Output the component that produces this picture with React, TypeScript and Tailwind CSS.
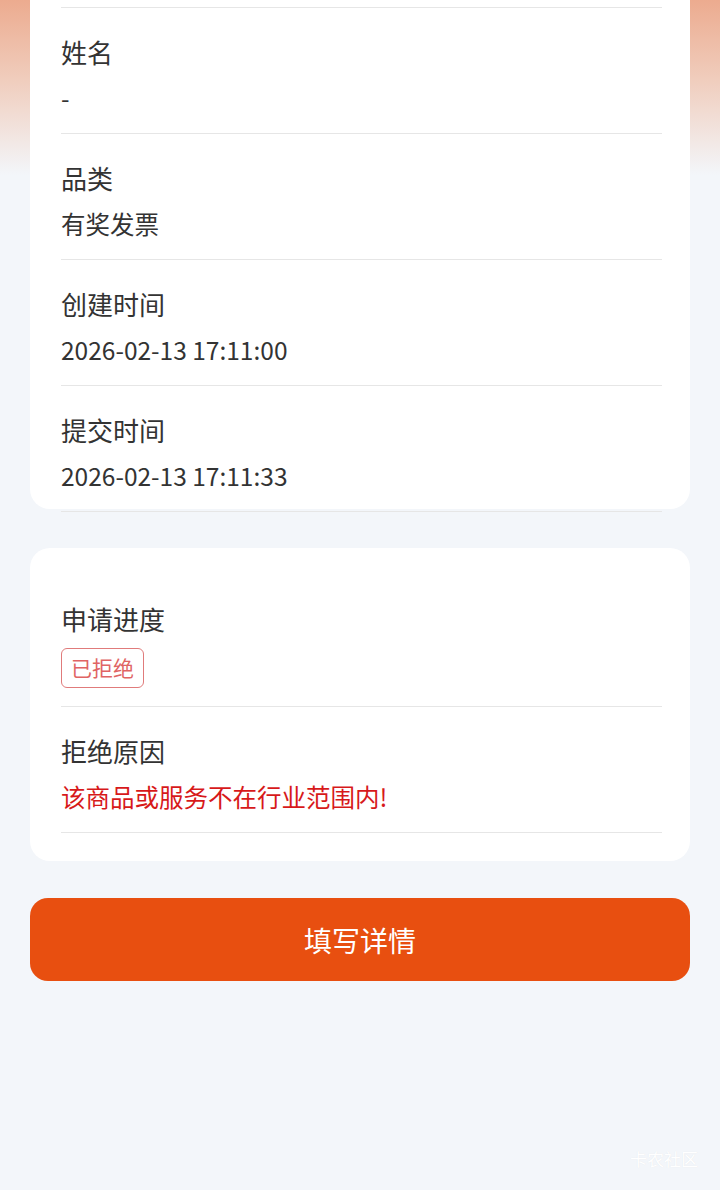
import React from "react";

const font = { fontFamily: '"Noto Sans CJK SC", "Noto Sans", sans-serif' };

function Row({ label, children }: { label: string; children: React.ReactNode }) {
  return (
    <div className="pt-[27px] pb-[18px] border-b border-[#e6e6e6]">
      <div className="text-[26px] leading-[34px] text-[#333333]">{label}</div>
      {children}
    </div>
  );
}

export default function App() {
  return (
    <div
      className="relative w-[720px] h-[1190px] overflow-hidden bg-[#f3f6fa] bg-[linear-gradient(180deg,#ecab8f_0px,#f0cdbd_80px,#f3f6fa_175px)]"
      style={font}
    >
      <div className="mx-[30px] bg-white rounded-b-[20px] pl-[31px] pr-[28px] h-[509px]">
        <div className="h-[8px] border-b border-[#e6e6e6]" />
        <Row label="姓名">
          <div className="mt-[12px] text-[24.5px] leading-[34px] text-[#333333]">-</div>
        </Row>
        <Row label="品类">
          <div className="mt-[12px] text-[24.5px] leading-[34px] text-[#333333]">有奖发票</div>
        </Row>
        <Row label="创建时间">
          <div className="mt-[12px] text-[24.5px] leading-[34px] text-[#333333]">2026-02-13 17:11:00</div>
        </Row>
        <Row label="提交时间">
          <div className="mt-[12px] text-[24.5px] leading-[34px] text-[#333333]">2026-02-13 17:11:33</div>
        </Row>
      </div>

      <div className="mx-[30px] mt-[39px] bg-white rounded-[20px] pl-[31px] pr-[28px] pt-[27px] pb-[28px]">
        <div className="pt-[27px] pb-[18px] border-b border-[#e6e6e6]">
          <div className="text-[26px] leading-[34px] text-[#333333]">申请进度</div>
          <div className="mt-[12px] inline-flex items-center h-[40px] px-[9px] border-[1.5px] border-[#e07b7b] rounded-[6px] text-[21px] text-[#e06464]">
            已拒绝
          </div>
        </div>
        <Row label="拒绝原因">
          <div className="mt-[12px] text-[24.5px] leading-[34px] text-[#d7191a]">该商品或服务不在行业范围内!</div>
        </Row>
      </div>

      <button className="mx-[30px] mt-[37px] w-[660px] h-[83px] rounded-[18px] bg-[#e84f10] text-white text-[28px] flex items-center justify-center">
        填写详情
      </button>

      <div className="absolute right-[22px] top-[1148px] text-[17px] leading-[22px] text-white [text-shadow:0_0_1px_rgba(0,0,0,0.08)]">
        卡农社区
      </div>
    </div>
  );
}
